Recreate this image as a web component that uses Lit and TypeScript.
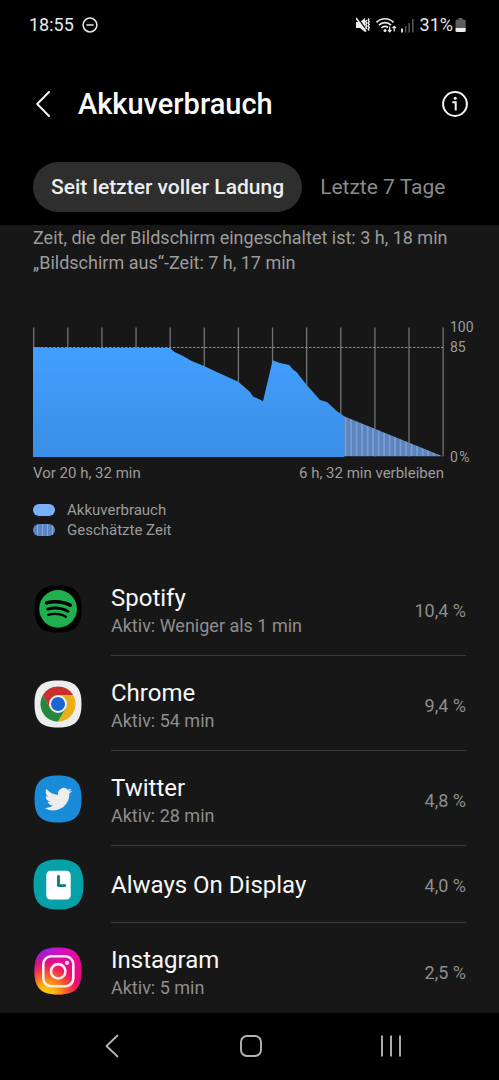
import { LitElement, html, svg, css, nothing } from "lit";
import { customElement, property, state } from "lit/decorators.js";

const TILE = "M24 .5C41 .5 47.5 7 47.5 24S41 47.5 24 47.5 .5 41 .5 24 7 .5 24 .5Z";

const spotify = svg`
  <path d=${TILE} fill="#000"/>
  <g transform="translate(5 4.8) scale(1.59)">
    <circle cx="12" cy="12" r="11.9" fill="#1faf4f"/>
    <path fill="#000" d="M17.521 17.34c-.24.359-.66.48-1.021.24-2.82-1.74-6.36-2.101-10.561-1.141-.418.122-.779-.179-.899-.539-.12-.421.18-.78.54-.9 4.56-1.021 8.52-.6 11.64 1.32.42.18.479.659.301 1.02zm1.44-3.3c-.301.42-.841.6-1.262.3-3.239-1.98-8.159-2.58-11.939-1.38-.479.12-1.02-.12-1.14-.6-.12-.48.12-1.021.6-1.141C9.6 9.9 15 10.561 18.72 12.84c.361.181.54.78.241 1.2zm.12-3.36C15.24 8.4 8.82 8.16 5.16 9.301c-.6.179-1.2-.181-1.38-.721-.18-.601.18-1.2.72-1.381 4.26-1.26 11.28-1.02 15.721 1.621.539.3.719 1.02.419 1.56-.299.421-1.02.599-1.559.3z"/>
  </g>`;

const chrome = svg`
  <path d=${TILE} fill="#ededed"/>
  <g transform="translate(24 24)">
    <path fill="#c9302c" d="M-15.2-8.8A17.6 17.6 0 0 1 15.2-8.8H0L-7.6 4.4Z"/>
    <path fill="#e9b116" d="M15.2-8.8A17.6 17.6 0 0 1 0 17.6L7.6 4.4 0-8.8Z"/>
    <path fill="#23873c" d="M0 17.6A17.6 17.6 0 0 1-15.2-8.8L-7.6 4.4 7.6 4.4Z"/>
    <circle r="9" fill="#f2f2f2"/>
    <circle r="7" fill="#1b66d2"/>
  </g>`;

const twitter = svg`
  <path d=${TILE} fill="#1a8bd8"/>
  <path fill="#ededed" transform="translate(10.6 10.4) scale(1.15)" d="M23.953 4.57a10 10 0 01-2.825.775 4.958 4.958 0 002.163-2.723c-.951.555-2.005.959-3.127 1.184a4.92 4.92 0 00-8.384 4.482C7.69 8.095 4.067 6.13 1.64 3.162a4.822 4.822 0 00-.666 2.475c0 1.71.87 3.213 2.188 4.096a4.904 4.904 0 01-2.228-.616v.06a4.923 4.923 0 003.946 4.827 4.996 4.996 0 01-2.212.085 4.936 4.936 0 004.604 3.417 9.867 9.867 0 01-6.102 2.105c-.39 0-.779-.023-1.17-.067a13.995 13.995 0 007.557 2.209c9.053 0 13.998-7.496 13.998-13.985 0-.21 0-.42-.015-.63A9.935 9.935 0 0024 4.59z"/>`;

const alwaysOn = svg`
  <path d=${TILE} fill="#05a0a8"/>
  <rect x="12.5" y="11" width="23" height="27" rx="4" fill="#fff"/>
  <path d="M24 16.500v8.500h6" fill="none" stroke="#0b7c82" stroke-width="2.700" stroke-linecap="round" stroke-linejoin="round"/>`;

const instagram = svg`
  <defs>
    <linearGradient id="ig-base" x1="0" y1="0" x2="1" y2=".35">
      <stop offset="0" stop-color="#6a2cf5"/><stop offset=".5" stop-color="#d60fc4"/><stop offset="1" stop-color="#ea0a86"/>
    </linearGradient>
    <radialGradient id="ig-glow" cx=".25" cy="1.02" r=".95">
      <stop offset="0" stop-color="#ffd500"/><stop offset=".22" stop-color="#fbb40c"/>
      <stop offset=".5" stop-color="#f8502a"/><stop offset=".75" stop-color="#ee0a6a" stop-opacity=".75"/>
      <stop offset="1" stop-color="#e80a90" stop-opacity="0"/>
    </radialGradient>
  </defs>
  <path d=${TILE} fill="url(#ig-base)"/>
  <path d=${TILE} fill="url(#ig-glow)"/>
  <g fill="none" stroke="#ffe9f0" stroke-width="2.6">
    <rect x="9.3" y="9.3" width="30" height="30" rx="8"/>
    <circle cx="24.2" cy="24.3" r="7.2"/>
  </g>
  <circle cx="33" cy="15.8" r="2.1" fill="#ffe9f0"/>`;

interface Usage {
  name: string;
  active?: string;
  share: string;
  icon: unknown;
  large?: boolean;
}

const USAGE: Usage[] = [
  { name: "Spotify", active: "Aktiv: Weniger als 1 min", share: "10,4 %", icon: spotify },
  { name: "Chrome", active: "Aktiv: 54 min", share: "9,4 %", icon: chrome },
  { name: "Twitter", active: "Aktiv: 28 min", share: "4,8 %", icon: twitter },
  { name: "Always On Display", share: "4,0 %", icon: alwaysOn, large: true },
  { name: "Instagram", active: "Aktiv: 5 min", share: "2,5 %", icon: instagram },
];

@customElement("status-bar")
class StatusBar extends LitElement {
  static styles = css`
    :host {
      display: flex;
      align-items: center;
      justify-content: space-between;
      height: 50px;
      padding: 0 33px 0 29px;
      color: #e8e8e8;
      font-size: 18px;
      line-height: 24px;
    }
    .group { display: flex; align-items: center; }
    .left { gap: 8px; }
    .right { gap: 2px; }
    svg { display: block; }
  `;

  render() {
    return html`
      <div class="group left">
        <span>18:55</span>
        <svg width="16" height="16" viewBox="0 0 16 16" fill="none" stroke="#e8e8e8" stroke-width="1.5" aria-hidden="true">
          <circle cx="8" cy="8" r="6.9"/><path d="M4.4 8h7.2"/>
        </svg>
      </div>
      <div class="group right">
        <svg width="62" height="18" viewBox="0 0 62 18" aria-hidden="true">
          <path d="M0 6H4L9 2V16L4 12H0Z" fill="#ededed"/>
          <path d="M1 1 11 15" stroke="#000" stroke-width="1.500"/>
          <path d="M0 2 10 15.500" stroke="#ededed" stroke-width="1.600"/>
          <path d="M10.700 4l-1 1.500 1 1.500-1 1.500 1 1.500-1 1.500 1 1.500M13.200 2.500l-1 1.500 1 1.500-1 1.500 1 1.500-1 1.500 1 1.500-1 1.500 1 1.500" fill="none" stroke="#ededed" stroke-width="1.400"/>
          <g fill="none" stroke="#ededed" stroke-width="1.700">
            <path d="M20.500 6.300a12 12 0 0 1 17 0"/>
            <path d="M23 9.200a8.500 8.500 0 0 1 12 0"/>
            <path d="M25.500 12a5 5 0 0 1 6.500-.500"/>
          </g>
          <circle cx="29" cy="14.500" r="1.500" fill="#ededed"/>
          <path d="M33.700 10.500v5M32 14l1.700 1.900 1.700-1.900M38.200 15.500v-5M36.500 12.200l1.700-1.900 1.700 1.900" fill="none" stroke="#ededed" stroke-width="1.200"/>
          <path d="M46 12.500v4" stroke="#ededed" stroke-width="1.800"/>
          <path d="M49.600 10v6.500M53.200 7v9.500M56.800 3v13.500" stroke="#5a5a5a" stroke-width="1.500"/>
        </svg>
        <span>31%</span>
        <svg width="11" height="16" viewBox="0 0 11 16" aria-hidden="true">
          <path d="M3.500 1h4v1.500h1.700q1.500 0 1.500 1.500V11H.5V4Q.5 2.500 2 2.500h1.500Z" fill="#5c5c5c"/>
          <path d="M.5 11h10.200v2.500q0 1.500-1.500 1.500H2q-1.500 0-1.500-1.500Z" fill="#ededed"/>
        </svg>
      </div>
    `;
  }
}

@customElement("battery-chart")
class BatteryChart extends LitElement {
  static styles = css`
    :host { display: block; color: #9c9c9c; }
    .chart { display: grid; grid-template-columns: 1fr 48px; column-gap: 6px; }
    .plot { display: block; width: 100%; height: 130px; }
    .axis {
      display: flex;
      flex-direction: column;
      margin: -10px 0;
      font-size: 14px;
      line-height: 20px;
    }
    .axis .zero { margin-top: auto; }
    .range {
      display: flex;
      justify-content: space-between;
      padding-top: 6px;
      font-size: 15px;
      line-height: 20px;
    }
    .legend {
      display: flex;
      flex-direction: column;
      margin: 17px 0 0;
      padding: 0;
      list-style: none;
      font-size: 15px;
      line-height: 20px;
    }
    .entry { display: flex; align-items: center; gap: 12px; }
    .swatch { width: 22px; height: 12px; border-radius: 6px; background: #78b1ff; }
    .estimated {
      background: repeating-linear-gradient(90deg, #5b86c4 0 4px, #86a8d8 4px 5px);
    }
  `;

  render() {
    const ticks = Array.from({ length: 13 }, (_, i) => 0.7 + i * 34.12);
    return html`
      <div class="chart">
        <svg class="plot" viewBox="0 0 411 130" preserveAspectRatio="none" role="img" aria-label="Akkuverbrauch">
          <defs>
            <linearGradient id="used" x1="0" y1="0" x2="0" y2="1">
              <stop offset="0" stop-color="#429fff"/><stop offset="1" stop-color="#3a8ee4"/>
            </linearGradient>
            <pattern id="stripes" width="5.500" height="130" patternUnits="userSpaceOnUse">
              <rect width="5.500" height="130" fill="#5c85bf"/>
              <rect x="4" width="1.200" height="130" fill="#86a8d8"/>
            </pattern>
          </defs>
          ${ticks.map((x) => svg`<path d="M${x} .500V129.500" stroke="#737373" stroke-width="1.300"/>`)}
          <path fill="url(#stripes)" d="M311 89.300 409.500 129.300H311Z"/>
          <path fill="url(#used)" d="M0 20 17 20.800 137 21 141 24.700 150 29 158.700 34 171 39 183.700 45 205.300 54.700 217 65 220.300 69.700 225.300 71.700 230 74.300 239.700 33.300 247 36 256.300 38 259.700 42.300 263.700 45.300 273.700 58 287 73 294.300 75.300 303.700 84 311.300 89.300V130H0Z"/>
          <path d="M0 20.500H411" stroke="#8f8f8f" stroke-width="1" stroke-dasharray="2.500 1.500"/>
        </svg>
        <div class="axis">
          <span>100</span>
          <span>85</span>
          <span class="zero">0&#8202;%</span>
        </div>
        <div class="range">
          <span>Vor 20 h, 32 min</span>
          <span>6 h, 32 min verbleiben</span>
        </div>
      </div>
      <ul class="legend">
        <li class="entry"><span class="swatch"></span>Akkuverbrauch</li>
        <li class="entry"><span class="swatch estimated"></span>Geschätzte Zeit</li>
      </ul>
    `;
  }
}

@customElement("usage-row")
class UsageRow extends LitElement {
  @property({ attribute: false }) item!: Usage;

  static styles = css`
    :host { display: block; }
    .row {
      display: grid;
      grid-template-columns: 50px 1fr;
      column-gap: 28px;
      width: 100%;
      padding: 0;
      border: 0;
      background: none;
      color: inherit;
      font: inherit;
      text-align: left;
    }
    .icon { display: block; place-self: center; width: 48px; height: 48px; }
    .large { width: 51px; height: 51px; }
    .body {
      display: flex;
      align-items: center;
      justify-content: space-between;
      padding: 22px 0 17px;
      border-bottom: 1px solid #3b3b3b;
    }
    :host(:last-child) .body { border-color: transparent; }
    .name { display: block; color: #f8f8f8; font-size: 24px; line-height: 31px; }
    .active { display: block; color: #8e8e8e; font-size: 18px; line-height: 24px; }
    .single { padding: 24px 0 21px; }
    .share { color: #8e8e8e; font-size: 18px; line-height: 24px; }
  `;

  render() {
    const { name, active, share, icon, large } = this.item;
    return html`
      <button class="row" type="button">
        <svg class="icon ${large ? "large" : ""}" viewBox="0 0 48 48" aria-hidden="true">${icon}</svg>
        <span class="body ${active ? "" : "single"}">
          <span>
            <span class="name">${name}</span>
            ${active ? html`<span class="active">${active}</span>` : nothing}
          </span>
          <span class="share">${share}</span>
        </span>
      </button>
    `;
  }
}

@customElement("app-root")
class AppRoot extends LitElement {
  @state() private tab = 0;

  static styles = css`
    :host {
      display: flex;
      flex-direction: column;
      height: 100vh;
      background: #000;
      color: #fafafa;
      font-family: Roboto, "Noto Sans", sans-serif;
    }
    button { border: 0; padding: 0; background: none; color: inherit; font: inherit; }
    svg { display: block; }
    .header {
      display: flex;
      align-items: center;
      height: 108px;
      padding: 0 31px 0 29px;
    }
    .back { width: 28px; padding: 0 7px; }
    .title { flex: 1; margin: 0 0 0 21px; font-size: 29px; line-height: 36px; font-weight: 500; }
    .tabs { display: flex; padding: 4px 33px 13px; }
    .tab {
      height: 50px;
      padding: 0 18px;
      border-radius: 25px;
      color: #8a8a8a;
      font-size: 21px;
      line-height: 24px;
    }
    .selected { background: #2e2e2e; color: #ededed; font-weight: 500; }
    .content {
      flex: 1;
      min-height: 0;
      overflow: auto;
      scrollbar-width: none;
      background: #171717;
    }
    .summary {
      margin: 0;
      padding: 0 33px 52px;
      color: #9c9c9c;
      font-size: 18px;
      line-height: 25px;
    }
    .chart { padding: 0 1px 21px 33px; }
    .list { padding: 0 33px; }
    .nav {
      display: grid;
      grid-template-columns: repeat(3, 1fr);
      height: 65px;
      padding: 0 38px 2px 42px;
    }
    .key { display: grid; place-items: center; }
  `;

  render() {
    const tabs = ["Seit letzter voller Ladung", "Letzte 7 Tage"];
    return html`
      <status-bar></status-bar>
      <header class="header">
        <button class="back" type="button" aria-label="Zurück">
          <svg width="14" height="26" viewBox="0 0 14 26" fill="none" stroke="#f5f5f5" stroke-width="1.900" stroke-linecap="round" stroke-linejoin="round">
            <path d="M13 1 1.200 13 13 25"/>
          </svg>
        </button>
        <h1 class="title">Akkuverbrauch</h1>
        <button type="button" aria-label="Info">
          <svg width="26" height="26" viewBox="0 0 26 26" fill="none" stroke="#f5f5f5" stroke-width="2">
            <circle cx="13" cy="13" r="11.900"/>
            <path d="M10.300 11.200h3.400v8.300"/>
            <circle cx="13.200" cy="7.300" r="1.500" fill="#f5f5f5" stroke="none"/>
          </svg>
        </button>
      </header>
      <div class="tabs" role="tablist">
        ${tabs.map(
          (label, i) => html`<button
            class="tab ${i === this.tab ? "selected" : ""}"
            type="button"
            role="tab"
            aria-selected=${i === this.tab}
            @click=${() => (this.tab = i)}
          >${label}</button>`
        )}
      </div>
      <main class="content">
        <p class="summary">
          Zeit, die der Bildschirm eingeschaltet ist: 3 h, 18 min<br />
          „Bildschirm aus“-Zeit: 7 h, 17 min
        </p>
        <battery-chart class="chart"></battery-chart>
        <div class="list">
          ${USAGE.map((item) => html`<usage-row .item=${item}></usage-row>`)}
        </div>
      </main>
      <nav class="nav">
        <button class="key" type="button" aria-label="Zurück">
          <svg width="14" height="24" viewBox="0 0 14 24" fill="none" stroke="#b4b4b4" stroke-width="1.800" stroke-linecap="round" stroke-linejoin="round">
            <path d="M12.500 1.500 1.500 12l11 10.500"/>
          </svg>
        </button>
        <button class="key" type="button" aria-label="Startseite">
          <svg width="24" height="24" viewBox="0 0 24 24" fill="none" stroke="#b4b4b4" stroke-width="1.900">
            <rect x="2" y="2" width="20" height="20" rx="6"/>
          </svg>
        </button>
        <button class="key" type="button" aria-label="Letzte Apps">
          <svg width="22" height="22" viewBox="0 0 22 22" stroke="#b4b4b4" stroke-width="1.900">
            <path d="M2 .500v21M11 .500v21M20 .500v21"/>
          </svg>
        </button>
      </nav>
    `;
  }
}
